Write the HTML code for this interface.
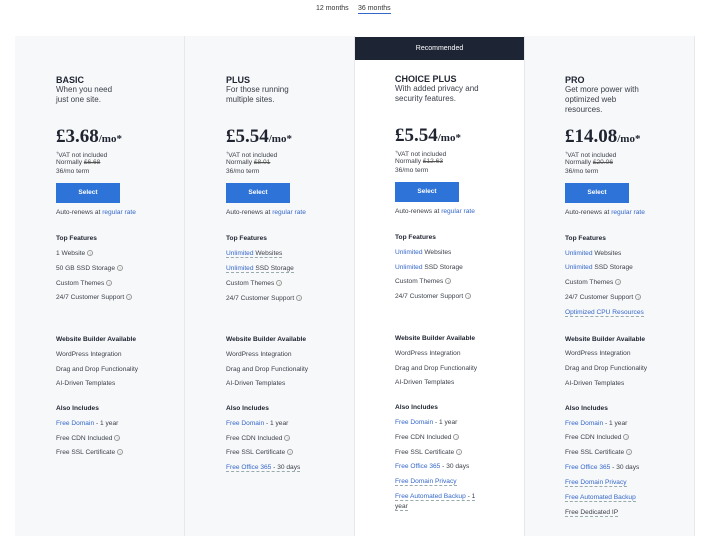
<!DOCTYPE html>
<html><head><meta charset="utf-8"><style>
*{margin:0;padding:0;box-sizing:border-box}
body{width:709px;height:524px;background:#fff;font-family:"Liberation Sans",sans-serif;color:#2b2f38;position:relative;overflow:hidden}
.card{position:absolute;top:36px;height:500px;width:170px;background:#f7f8fa;border-left:1px solid #e6e8ec}
.t{position:absolute;white-space:nowrap;font-size:6.6px;color:#3a3f48}
.h{font-size:9px;font-weight:bold;color:#1f2430}
.d{font-size:8px;color:#3a3f48;line-height:10px}
.p{font-family:"Liberation Serif",serif;font-weight:bold;font-size:19px;color:#1f2430}
.p small{font-size:11px}
.b{font-weight:bold;color:#1f2430}
a,.l{color:#3467c9;text-decoration:none}
.u{border-bottom:1px dashed #9aa;}
.btn{position:absolute;width:64px;height:20px;background:#2e73d8;color:#fff;font-size:6.5px;font-weight:bold;text-align:center;line-height:20px}
.q{display:inline-block;width:6px;height:6px;border:0.7px solid #999;border-radius:50%;font-size:4px;text-align:center;line-height:5px;color:#999;vertical-align:middle;margin-left:2px}
s{color:#555}
</style></head><body>
<div class="t" style="left:316px;top:5px;font-size:7px;color:#333">12 months</div>
<div class="t" style="left:358px;top:5px;font-size:7px;color:#333;border-bottom:1px solid #3467c9;padding-bottom:1px">36 months</div>

<div class="card" style="left:15px;border-left:none"></div>
<div class="card" style="left:184px"></div>
<div class="card" style="left:354px;background:#fff"></div>
<div class="card" style="left:524px;width:171px;border-right:1px solid #e6e8ec"></div>
<div style="position:absolute;left:355px;top:37px;width:169px;height:23px;background:#1d2535;color:#fff;font-size:7px;text-align:center;line-height:23px">Recommended</div>

<!-- BASIC -->
<div class="t h" style="left:56px;top:75px">BASIC</div>
<div class="t d" style="left:56px;top:85px">When you need<br>just one site.</div>
<div class="t p" style="left:56px;top:126px">£3.68<small>/mo*</small></div>
<div class="t" style="left:56px;top:150px"><sup style="font-size:4px">†</sup>VAT not included</div>
<div class="t" style="left:56px;top:159px">Normally <s>£6.68</s></div>
<div class="t" style="left:56px;top:168px">36/mo term</div>
<div class="btn" style="left:56px;top:183px">Select</div>
<div class="t" style="left:56px;top:209px">Auto-renews at <a>regular rate</a></div>
<div class="t b" style="left:56px;top:235px">Top Features</div>
<div class="t" style="left:56px;top:250px">1 Website<span class="q">?</span></div>
<div class="t" style="left:56px;top:265px">50 GB SSD Storage<span class="q">?</span></div>
<div class="t" style="left:56px;top:280px">Custom Themes<span class="q">?</span></div>
<div class="t" style="left:56px;top:294px">24/7 Customer Support<span class="q">?</span></div>
<div class="t b" style="left:56px;top:336px">Website Builder Available</div>
<div class="t" style="left:56px;top:351px">WordPress Integration</div>
<div class="t" style="left:56px;top:366px">Drag and Drop Functionality</div>
<div class="t" style="left:56px;top:380px">AI-Driven Templates</div>
<div class="t b" style="left:56px;top:405px">Also Includes</div>
<div class="t" style="left:56px;top:420px"><a>Free Domain</a> - 1 year</div>
<div class="t" style="left:56px;top:435px">Free CDN Included<span class="q">?</span></div>
<div class="t" style="left:56px;top:449px">Free SSL Certificate<span class="q">?</span></div>

<!-- PLUS -->
<div class="t h" style="left:226px;top:75px">PLUS</div>
<div class="t d" style="left:226px;top:85px">For those running<br>multiple sites.</div>
<div class="t p" style="left:226px;top:126px">£5.54<small>/mo*</small></div>
<div class="t" style="left:226px;top:150px"><sup style="font-size:4px">†</sup>VAT not included</div>
<div class="t" style="left:226px;top:159px">Normally <s>£8.01</s></div>
<div class="t" style="left:226px;top:168px">36/mo term</div>
<div class="btn" style="left:226px;top:183px">Select</div>
<div class="t" style="left:226px;top:209px">Auto-renews at <a>regular rate</a></div>
<div class="t b" style="left:226px;top:235px">Top Features</div>
<div class="t" style="left:226px;top:250px"><span class="u"><a>Unlimited</a> Websites</span></div>
<div class="t" style="left:226px;top:265px"><span class="u"><a>Unlimited</a> SSD Storage</span></div>
<div class="t" style="left:226px;top:280px">Custom Themes<span class="q">?</span></div>
<div class="t" style="left:226px;top:295px">24/7 Customer Support<span class="q">?</span></div>
<div class="t b" style="left:226px;top:336px">Website Builder Available</div>
<div class="t" style="left:226px;top:351px">WordPress Integration</div>
<div class="t" style="left:226px;top:366px">Drag and Drop Functionality</div>
<div class="t" style="left:226px;top:380px">AI-Driven Templates</div>
<div class="t b" style="left:226px;top:405px">Also Includes</div>
<div class="t" style="left:226px;top:420px"><a>Free Domain</a> - 1 year</div>
<div class="t" style="left:226px;top:435px">Free CDN Included<span class="q">?</span></div>
<div class="t" style="left:226px;top:449px">Free SSL Certificate<span class="q">?</span></div>
<div class="t" style="left:226px;top:464px"><span class="u"><a>Free Office 365</a> - 30 days</span></div>

<!-- CHOICE PLUS -->
<div class="t h" style="left:395px;top:74px">CHOICE PLUS</div>
<div class="t d" style="left:395px;top:84px">With added privacy and<br>security features.</div>
<div class="t p" style="left:395px;top:125px">£5.54<small>/mo*</small></div>
<div class="t" style="left:395px;top:149px"><sup style="font-size:4px">†</sup>VAT not included</div>
<div class="t" style="left:395px;top:158px">Normally <s>£12.63</s></div>
<div class="t" style="left:395px;top:167px">36/mo term</div>
<div class="btn" style="left:395px;top:182px">Select</div>
<div class="t" style="left:395px;top:208px">Auto-renews at <a>regular rate</a></div>
<div class="t b" style="left:395px;top:234px">Top Features</div>
<div class="t" style="left:395px;top:249px"><a>Unlimited</a> Websites</div>
<div class="t" style="left:395px;top:264px"><a>Unlimited</a> SSD Storage</div>
<div class="t" style="left:395px;top:278px">Custom Themes<span class="q">?</span></div>
<div class="t" style="left:395px;top:293px">24/7 Customer Support<span class="q">?</span></div>
<div class="t b" style="left:395px;top:335px">Website Builder Available</div>
<div class="t" style="left:395px;top:350px">WordPress Integration</div>
<div class="t" style="left:395px;top:365px">Drag and Drop Functionality</div>
<div class="t" style="left:395px;top:379px">AI-Driven Templates</div>
<div class="t b" style="left:395px;top:404px">Also Includes</div>
<div class="t" style="left:395px;top:419px"><a>Free Domain</a> - 1 year</div>
<div class="t" style="left:395px;top:434px">Free CDN Included<span class="q">?</span></div>
<div class="t" style="left:395px;top:449px">Free SSL Certificate<span class="q">?</span></div>
<div class="t" style="left:395px;top:463px"><a>Free Office 365</a> - 30 days</div>
<div class="t" style="left:395px;top:478px"><span class="u"><a>Free Domain Privacy</a></span></div>
<div class="t" style="left:395px;top:493px"><span class="u"><a>Free Automated Backup</a> - 1</span></div>
<div class="t" style="left:395px;top:503px"><span class="u">year</span></div>

<!-- PRO -->
<div class="t h" style="left:565px;top:75px">PRO</div>
<div class="t d" style="left:565px;top:85px">Get more power with<br>optimized web<br>resources.</div>
<div class="t p" style="left:565px;top:126px">£14.08<small>/mo*</small></div>
<div class="t" style="left:565px;top:150px"><sup style="font-size:4px">†</sup>VAT not included</div>
<div class="t" style="left:565px;top:159px">Normally <s>£20.06</s></div>
<div class="t" style="left:565px;top:168px">36/mo term</div>
<div class="btn" style="left:565px;top:183px">Select</div>
<div class="t" style="left:565px;top:209px">Auto-renews at <a>regular rate</a></div>
<div class="t b" style="left:565px;top:235px">Top Features</div>
<div class="t" style="left:565px;top:250px"><a>Unlimited</a> Websites</div>
<div class="t" style="left:565px;top:264px"><a>Unlimited</a> SSD Storage</div>
<div class="t" style="left:565px;top:279px">Custom Themes<span class="q">?</span></div>
<div class="t" style="left:565px;top:294px">24/7 Customer Support<span class="q">?</span></div>
<div class="t" style="left:565px;top:309px"><span class="u"><a>Optimized CPU Resources</a></span></div>
<div class="t b" style="left:565px;top:336px">Website Builder Available</div>
<div class="t" style="left:565px;top:350px">WordPress Integration</div>
<div class="t" style="left:565px;top:365px">Drag and Drop Functionality</div>
<div class="t" style="left:565px;top:380px">AI-Driven Templates</div>
<div class="t b" style="left:565px;top:405px">Also Includes</div>
<div class="t" style="left:565px;top:420px"><a>Free Domain</a> - 1 year</div>
<div class="t" style="left:565px;top:434px">Free CDN Included<span class="q">?</span></div>
<div class="t" style="left:565px;top:449px">Free SSL Certificate<span class="q">?</span></div>
<div class="t" style="left:565px;top:464px"><a>Free Office 365</a> - 30 days</div>
<div class="t" style="left:565px;top:479px"><span class="u"><a>Free Domain Privacy</a></span></div>
<div class="t" style="left:565px;top:494px"><span class="u"><a>Free Automated Backup</a></span></div>
<div class="t" style="left:565px;top:509px"><span class="u">Free Dedicated IP</span></div>
</body></html>
